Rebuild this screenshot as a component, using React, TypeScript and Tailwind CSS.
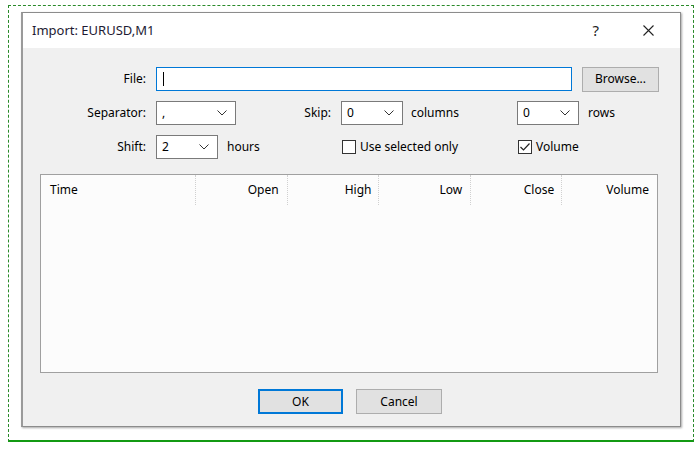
import React from "react";

const font = { fontFamily: '"Noto Sans", "Liberation Sans", sans-serif' };

function Chevron() {
  return (
    <svg width="10" height="6" viewBox="0 0 10 6" className="shrink-0">
      <path d="M0.5 0.5 L5 5 L9.5 0.5" fill="none" stroke="#333" strokeWidth="1" />
    </svg>
  );
}

function Combo({ value, width }: { value: string; width: string }) {
  return (
    <div className={`flex h-[24px] ${width} items-center justify-between border border-[#7a7a7a] bg-white pl-[5px] pr-[8px]`}>
      <span>{value}</span>
      <Chevron />
    </div>
  );
}

function Check({ checked, label }: { checked?: boolean; label: string }) {
  return (
    <div className="flex items-center gap-[4px]">
      <div className="flex h-[14px] w-[14px] items-center justify-center border border-[#333] bg-white">
        {checked && (
          <svg width="12" height="12" viewBox="0 0 12 12">
            <path d="M1.5 6 L4.5 9 L10.5 2.5" fill="none" stroke="#222" strokeWidth="1.2" />
          </svg>
        )}
      </div>
      <span>{label}</span>
    </div>
  );
}

const columns = [
  { name: "Time", w: "w-[155px]", align: "justify-start pl-[9px]" },
  { name: "Open", w: "w-[92px]", align: "justify-end pr-[8px]" },
  { name: "High", w: "w-[92px]", align: "justify-end pr-[7px]" },
  { name: "Low", w: "w-[92px]", align: "justify-end pr-[8px]" },
  { name: "Close", w: "w-[91px]", align: "justify-end pr-[7px]" },
  { name: "Volume", w: "w-[95px]", align: "justify-end pr-[8px]" },
];

export default function App() {
  return (
    <div className="h-[451px] w-[700px] overflow-hidden bg-white pl-[8px] pt-[5px] text-[12px] text-black" style={font}>
      <div className="h-[437px] w-[686px] border border-dashed border-[#2a8a2a] border-b-2 border-b-[#139a13] [border-bottom-style:solid] pl-[12px] pt-[6px]">
        <div className="flex h-[415px] w-[660px] flex-col border border-[#8c8c8c] border-l-2 border-l-[#9a9a9a] bg-[#f0f0f0] shadow-[1px_1px_2px_rgba(0,0,0,0.35)]">
          {/* title bar */}
          <div className="flex h-[35px] items-center bg-white">
            <span className="ml-[9px] text-[13px] text-[#1e1a33]">Import: EURUSD,M1</span>
            <span className="ml-auto text-[15px] text-[#222]">?</span>
            <svg width="11" height="11" viewBox="0 0 11 11" className="ml-[44px] mr-[26px]">
              <path d="M0.5 0.5 L10.5 10.5 M10.5 0.5 L0.5 10.5" stroke="#222" strokeWidth="1.1" />
            </svg>
          </div>

          {/* form rows */}
          <div className="mt-[19px] flex flex-col gap-[10px]">
            <div className="flex h-[24px] items-center">
              <span className="w-[123px] text-right">File:</span>
              <div className="ml-[10px] flex h-[24px] w-[416px] items-center border border-[#0078d7] bg-white pl-[6px]">
                <div className="h-[14px] w-px bg-black" />
              </div>
              <button className="ml-[10px] h-[25px] w-[77px] border border-[#adadad] bg-[#e1e1e1]">Browse...</button>
            </div>

            <div className="flex h-[24px] items-center">
              <span className="w-[123px] text-right">Separator:</span>
              <div className="ml-[10px]">
                <Combo value="," width="w-[80px]" />
              </div>
              <span className="w-[95px] text-right">Skip:</span>
              <div className="ml-[10px]">
                <Combo value="0" width="w-[62px]" />
              </div>
              <span className="ml-[8px] w-[106px]">columns</span>
              <Combo value="0" width="w-[62px]" />
              <span className="ml-[9px]">rows</span>
            </div>

            <div className="flex h-[24px] items-center">
              <span className="w-[123px] text-right">Shift:</span>
              <div className="ml-[10px]">
                <Combo value="2" width="w-[62px]" />
              </div>
              <span className="ml-[9px] w-[115px]">hours</span>
              <div className="w-[176px]">
                <Check label="Use selected only" />
              </div>
              <Check checked label="Volume" />
            </div>
          </div>

          {/* data table */}
          <div className="ml-[17px] mt-[15px] h-[199px] w-[618px] border border-[#a0a0a0] bg-[#fcfcfc]">
            <div className="flex h-[30px]">
              {columns.map((c, i) => (
                <div
                  key={c.name}
                  className={`flex ${c.w} ${c.align} items-center ${i < columns.length - 1 ? "border-r border-dotted border-r-[#d0d0d0]" : ""}`}
                >
                  {c.name}
                </div>
              ))}
            </div>
          </div>

          {/* buttons */}
          <div className="mt-[16px] flex gap-[13px] pl-[235px]">
            <button className="h-[25px] w-[85px] border-2 border-[#0078d7] bg-[#e1e1e1]">OK</button>
            <button className="h-[25px] w-[86px] border border-[#adadad] bg-[#e1e1e1]">Cancel</button>
          </div>
        </div>
      </div>
    </div>
  );
}
